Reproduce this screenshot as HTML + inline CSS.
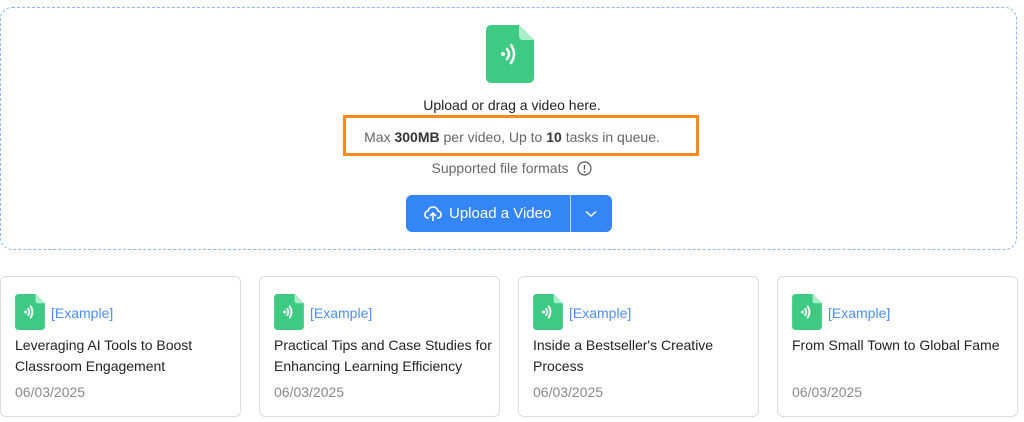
<!DOCTYPE html>
<html><head><style>
body{margin:0;width:1024px;height:422px;background:#fff;font-family:"Liberation Sans",sans-serif;position:relative;overflow:hidden}
.drop{position:absolute;left:0;top:7px;width:1017px;height:243px;border:1px dashed #8fb8f0;border-radius:12px;box-sizing:border-box}
.c{position:absolute;left:0;width:1024px;text-align:center}
.orange{position:absolute;left:343px;top:115px;width:356px;height:41px;border:3px solid #f58a1f;box-sizing:border-box}
.btn{position:absolute;left:406px;top:195px;width:206px;height:37px;background:#3485f5;border-radius:6px;color:#fff}
.card{position:absolute;top:276px;width:241px;height:141px;border:1px solid #dcdcdc;border-radius:6px;box-sizing:border-box}
.card .ex{position:absolute;left:50px;top:28px;color:#4d8ff5;font-size:14px}
.card .t{position:absolute;left:14px;top:58px;width:226px;font-size:14px;line-height:21px;color:#222}
.card .d{position:absolute;left:14px;top:107px;font-size:14px;color:#888}
.card svg{position:absolute;left:14px;top:17px}
</style></head><body>
<div class="drop"></div>
<svg style="position:absolute;left:486px;top:25px" width="48" height="58" viewBox="0 0 48 58">
<path d="M6 0H33L48 15V52Q48 58 42 58H6Q0 58 0 52V6Q0 0 6 0Z" fill="#3fca84"/>
<path d="M33 0L48 15H37Q33 15 33 11Z" fill="#a8efc9"/>
<circle cx="17" cy="29" r="2" fill="#fff"/>
<path d="M21 24Q25 29 21 34M25 20Q31 29 25 38" stroke="#fff" stroke-width="2.5" fill="none" stroke-linecap="round"/>
</svg>
<div class="c" style="top:97px;font-size:14px;color:#222">Upload or drag a video here.</div>
<div class="orange"></div>
<div class="c" style="top:129px;font-size:14px;color:#666">Max <b style="color:#333">300MB</b> per video, Up to <b style="color:#333">10</b> tasks in queue.</div>
<div class="c" style="top:160px;font-size:14px;color:#666;left:-12px">Supported file formats</div>
<svg style="position:absolute;left:577px;top:161px" width="15" height="15" viewBox="0 0 15 15"><circle cx="7.5" cy="7.5" r="6.5" stroke="#555" fill="none" stroke-width="1.2"/><path d="M7.5 4V8.5" stroke="#555" stroke-width="1.4"/><circle cx="7.5" cy="10.8" r=".9" fill="#555"/></svg>
<div class="btn">
<svg style="position:absolute;left:18px;top:11px" width="18" height="16" viewBox="0 0 18 16"><path d="M5 12H4Q1 12 1 8.5Q1 5.5 4 5Q5 1 9 1Q13 1 14 5Q17 5.5 17 8.5Q17 12 14 12H13" stroke="#fff" stroke-width="1.6" fill="none"/><path d="M9 15V7M6 10L9 7L12 10" stroke="#fff" stroke-width="1.6" fill="none"/></svg>
<span style="position:absolute;left:43px;top:10px;font-size:15px">Upload a Video</span>
<div style="position:absolute;left:164px;top:0;width:1px;height:37px;background:#bcd5fb"></div>
<svg style="position:absolute;left:179px;top:15px" width="12" height="8" viewBox="0 0 12 8"><path d="M1 1.5L6 6L11 1.5" stroke="#fff" stroke-width="1.5" fill="none"/></svg>
</div>
<div class="card" style="left:0"><svg width="30" height="36" viewBox="0 0 48 58"><path d="M6 0H33L48 15V52Q48 58 42 58H6Q0 58 0 52V6Q0 0 6 0Z" fill="#3fca84"/><path d="M33 0L48 15H37Q33 15 33 11Z" fill="#a8efc9"/><circle cx="17" cy="29" r="2.5" fill="#fff"/><path d="M21 24Q25 29 21 34M25 20Q31 29 25 38" stroke="#fff" stroke-width="3" fill="none" stroke-linecap="round"/></svg><div class="ex">[Example]</div><div class="t">Leveraging AI Tools to Boost<br>Classroom Engagement</div><div class="d">06/03/2025</div></div>
<div class="card" style="left:259px"><svg width="30" height="36" viewBox="0 0 48 58"><path d="M6 0H33L48 15V52Q48 58 42 58H6Q0 58 0 52V6Q0 0 6 0Z" fill="#3fca84"/><path d="M33 0L48 15H37Q33 15 33 11Z" fill="#a8efc9"/><circle cx="17" cy="29" r="2.5" fill="#fff"/><path d="M21 24Q25 29 21 34M25 20Q31 29 25 38" stroke="#fff" stroke-width="3" fill="none" stroke-linecap="round"/></svg><div class="ex">[Example]</div><div class="t">Practical Tips and Case Studies for<br>Enhancing Learning Efficiency</div><div class="d">06/03/2025</div></div>
<div class="card" style="left:518px"><svg width="30" height="36" viewBox="0 0 48 58"><path d="M6 0H33L48 15V52Q48 58 42 58H6Q0 58 0 52V6Q0 0 6 0Z" fill="#3fca84"/><path d="M33 0L48 15H37Q33 15 33 11Z" fill="#a8efc9"/><circle cx="17" cy="29" r="2.5" fill="#fff"/><path d="M21 24Q25 29 21 34M25 20Q31 29 25 38" stroke="#fff" stroke-width="3" fill="none" stroke-linecap="round"/></svg><div class="ex">[Example]</div><div class="t">Inside a Bestseller's Creative<br>Process</div><div class="d">06/03/2025</div></div>
<div class="card" style="left:777px"><svg width="30" height="36" viewBox="0 0 48 58"><path d="M6 0H33L48 15V52Q48 58 42 58H6Q0 58 0 52V6Q0 0 6 0Z" fill="#3fca84"/><path d="M33 0L48 15H37Q33 15 33 11Z" fill="#a8efc9"/><circle cx="17" cy="29" r="2.5" fill="#fff"/><path d="M21 24Q25 29 21 34M25 20Q31 29 25 38" stroke="#fff" stroke-width="3" fill="none" stroke-linecap="round"/></svg><div class="ex">[Example]</div><div class="t">From Small Town to Global Fame</div><div class="d">06/03/2025</div></div>
</body></html>
